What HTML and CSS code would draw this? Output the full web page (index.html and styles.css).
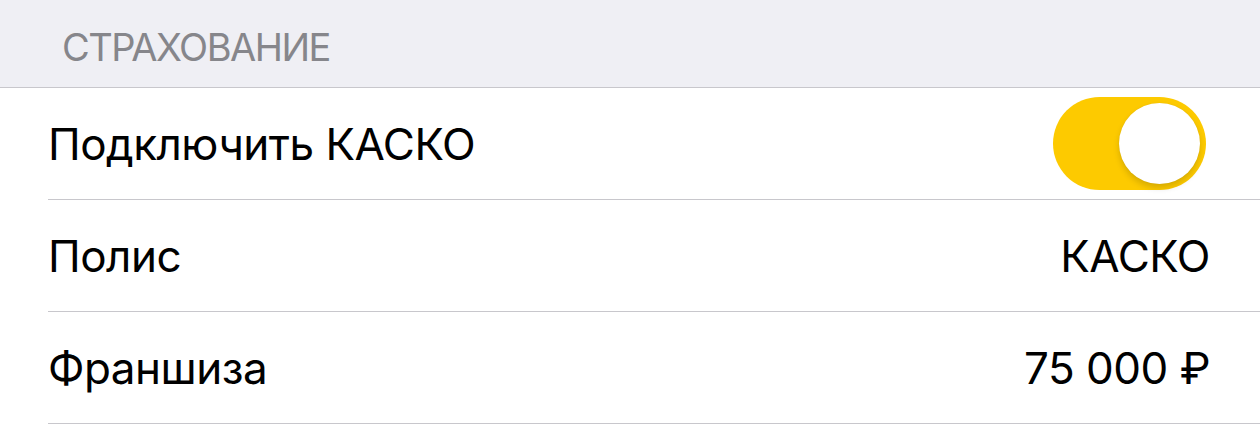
FILE: index.html
```html
<!DOCTYPE html>
<html lang="ru">
<head>
<meta charset="utf-8">
<link rel="stylesheet" href="styles.css">
</head>
<body>
<div class="section-header"><span class="section-title">СТРАХОВАНИЕ</span></div>
<div class="list">
  <div class="row">
    <div class="row-inner">
      <span class="label">Подключить КАСКО</span>
      <span class="switch on"><span class="knob"></span></span>
    </div>
  </div>
  <div class="row">
    <div class="row-inner">
      <span class="label">Полис</span>
      <span class="value">КАСКО</span>
    </div>
  </div>
  <div class="row">
    <div class="row-inner">
      <span class="label">Франшиза</span>
      <span class="value">75 000 ₽</span>
    </div>
  </div>
</div>
</body>
</html>
```
FILE: styles.css
```css
html, body {
  margin: 0;
  padding: 0;
  background: #ffffff;
  font-family: Inter, "Noto Sans", sans-serif;
  -webkit-font-smoothing: antialiased;
}
.section-header {
  background: #efeff4;
  border-bottom: 1px solid #c8c7cc;
  display: flex;
  align-items: center;
  padding: 7px 0 0 62px;
  box-sizing: border-box;
  height: 88px;
}
.section-title {
  font-size: 38px;
  color: #86868b;
  letter-spacing: -1.5px;
}
.list {
  background: #fff;
}
.row {
  padding-left: 48px;
}
.row-inner {
  height: 112px;
  box-sizing: border-box;
  border-bottom: 1px solid #c8c7cc;
  display: flex;
  align-items: center;
  justify-content: space-between;
  padding-right: 50px;
}
.label, .value {
  font-size: 44px;
  letter-spacing: -0.5px;
  color: #000;
}
.switch {
  width: 153px;
  height: 93px;
  border-radius: 47px;
  background: #fdca00;
  position: relative;
  margin-right: 4px;
}
.knob {
  position: absolute;
  top: 6px;
  right: 6px;
  width: 81px;
  height: 81px;
  border-radius: 50%;
  background: #fff;
  box-shadow: 0 4px 6px rgba(0,0,0,0.15), 0 0 1px rgba(0,0,0,0.1);
}
```
